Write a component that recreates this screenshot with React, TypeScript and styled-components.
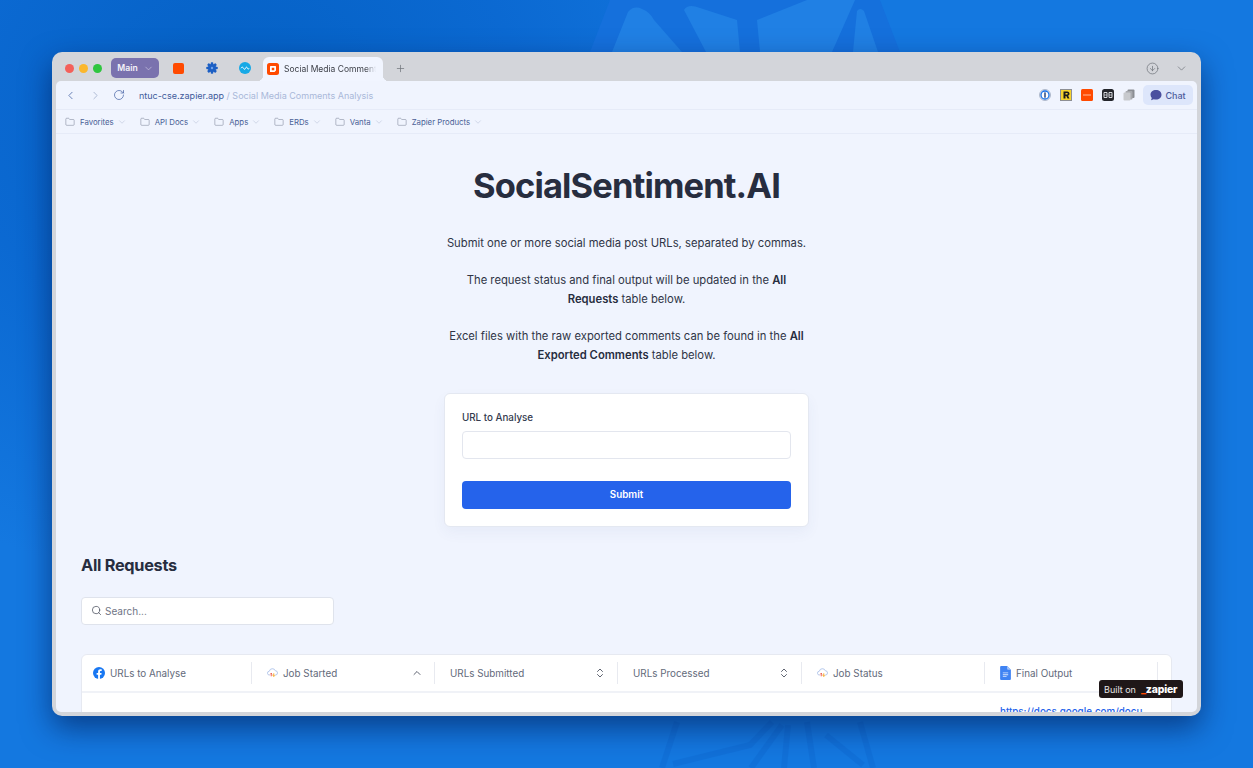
import React from "react";
import styled, { createGlobalStyle } from "styled-components";
import {
  ChevronLeft,
  ChevronRight,
  RotateCw,
  Folder,
  ChevronDown,
  ChevronUp,
  ChevronsUpDown,
  Search,
  Plus,
  CircleArrowDown,
} from "lucide-react";

const Global = createGlobalStyle`
  html, body { margin: 0; padding: 0; height: 768px; overflow: hidden; }
  body { font-family: Inter, "Liberation Sans", sans-serif; }
  * { box-sizing: border-box; }
`;

const Desktop = styled.div`
  position: relative;
  width: 1253px;
  height: 768px;
  padding: 52px 52px;
  overflow: hidden;
  background:
    radial-gradient(ellipse 560px 480px at 240px 110px, #0460c3 0%, rgba(8, 100, 205, 0.75) 50%, rgba(20, 120, 224, 0) 100%),
    #1478e0;
`;

const Wallpaper = styled.svg`
  position: absolute;
  left: 0;
  top: 0;
  width: 1253px;
  height: 768px;
`;

const Win = styled.div`
  position: relative;
  width: 1149px;
  height: 664px;
  display: flex;
  flex-direction: column;
  background: #d3d5da;
  border-radius: 10px;
  box-shadow: 0 12px 30px rgba(0, 25, 80, 0.6);
  padding: 0 4px 4px;
`;

const TabStrip = styled.div`
  height: 29px;
  flex: none;
  display: flex;
  align-items: center;
  padding: 3px 0 0 9px;
`;

const Lights = styled.div`
  display: flex;
  gap: 5px;
  margin-right: 9px;
`;

const Light = styled.span<{ $c: string }>`
  width: 9px;
  height: 9px;
  border-radius: 50%;
  background: ${(p) => p.$c};
`;

const Space = styled.button`
  width: 48px;
  height: 20px;
  border: 0;
  border-radius: 5px;
  background: #7a72ae;
  color: #f4f3fa;
  font: 600 8.6px Inter, sans-serif;
  display: flex;
  align-items: center;
  justify-content: center;
  gap: 5px;
  padding: 0 0 0 1px;
`;

const PinSlot = styled.div`
  width: 33px;
  height: 24px;
  display: flex;
  align-items: center;
  justify-content: center;
`;

const PinRow = styled.div`
  display: flex;
  margin-left: 3px;
  margin-right: 2px;
`;

const ActiveTab = styled.div`
  position: relative;
  align-self: flex-end;
  width: 120px;
  height: 24px;
  background: #f1f5ff;
  border-radius: 6px 6px 0 0;
  display: flex;
  align-items: center;
  gap: 5px;
  padding: 0 0 0 4px;
  &::before, &::after {
    content: "";
    position: absolute;
    bottom: 0;
    width: 6px;
    height: 6px;
  }
  &::before {
    left: -6px;
    background: radial-gradient(circle at 0 0, transparent 6px, #f1f5ff 6.5px);
  }
  &::after {
    right: -6px;
    background: radial-gradient(circle at 100% 0, transparent 6px, #f1f5ff 6.5px);
  }
`;

const TabTitle = styled.span`
  font-size: 8.5px;
  color: #3a3d45;
  white-space: nowrap;
  overflow: hidden;
  width: 92px;
  -webkit-mask-image: linear-gradient(90deg, #000 88%, transparent 100%);
  mask-image: linear-gradient(90deg, #000 88%, transparent 100%);
`;

const NewTab = styled.div`
  margin-left: 12px;
  color: #70747c;
  display: flex;
`;

const StripEnd = styled.div`
  margin-left: auto;
  display: flex;
  align-items: center;
  gap: 16px;
  padding-right: 9px;
  color: #6c7078;
`;

const Panel = styled.div`
  position: relative;
  flex: 1;
  min-height: 0;
  background: #f0f4fe;
  border-radius: 5px;
  overflow: hidden;
  display: flex;
  flex-direction: column;
`;

const AddressBar = styled.div`
  height: 29px;
  flex: none;
  display: flex;
  align-items: center;
  padding: 0 4px 0 8px;
  border-bottom: 1px solid #e6ebf8;
`;

const NavBtn = styled.span<{ $w: number; $c: string }>`
  width: ${(p) => p.$w}px;
  display: flex;
  color: ${(p) => p.$c};
`;

const Url = styled.div`
  margin-left: 6px;
  font-size: 9px;
  color: #3f5b9b;
  white-space: nowrap;
`;

const UrlRest = styled.span`
  color: #a9b8d9;
`;

const ExtRow = styled.div`
  margin-left: auto;
  display: flex;
  align-items: center;
  gap: 9px;
`;

const Chat = styled.div`
  width: 50px;
  height: 20px;
  margin-left: -1px;
  border-radius: 5px;
  background: #dde6fb;
  color: #4d5c9c;
  font-size: 9px;
  font-weight: 500;
  display: flex;
  align-items: center;
  justify-content: center;
  gap: 3px;
`;

const Bookmarks = styled.div`
  height: 24px;
  flex: none;
  display: flex;
  align-items: center;
  padding: 1px 0 0 9px;
  gap: 13px;
  border-bottom: 1px solid #e6ebf8;
`;

const Bookmark = styled.div`
  display: flex;
  align-items: center;
  color: #4a5f96;
  font-size: 7.8px;
  font-weight: 400;
  gap: 5px;
  svg:first-child { color: #7c8598; }
  svg:last-child { color: #b1bbd2; margin-left: -2px; }
`;

const Page = styled.main`
  flex: 1;
  min-height: 0;
  padding: 30px 25px 0;
  overflow: hidden;
`;

const Title = styled.h1`
  margin: 0;
  text-align: center;
  font-size: 34.5px;
  line-height: 44px;
  font-weight: 700;
  letter-spacing: -0.86px;
  color: #272d3f;
`;

const Intro = styled.div`
  width: 364px;
  margin: 26px auto 0;
  text-align: center;
  font-size: 11.25px;
  line-height: 19.5px;
  color: #2f3546;
  p { margin: 0 0 17px; }
  b { font-weight: 600; color: #272d3f; }
`;

const FormCard = styled.form`
  width: 365px;
  height: 134px;
  margin: 27px 0 0 363px;
  padding: 17px 17px 0;
  background: #fff;
  border: 1px solid #e4e8f1;
  border-radius: 6px;
  box-shadow: 0 6px 14px rgba(60, 80, 140, 0.05);
`;

const Label = styled.label`
  display: block;
  font-size: 9.8px;
  line-height: 13px;
  font-weight: 500;
  color: #343a4e;
`;

const TextInput = styled.input`
  display: block;
  width: 329px;
  height: 28px;
  margin-top: 7px;
  border: 1px solid #e3e6ee;
  border-radius: 4px;
  background: #fff;
`;

const Submit = styled.button`
  display: block;
  width: 329px;
  height: 28px;
  margin-top: 22px;
  border: 0;
  border-radius: 4px;
  background: #2563eb;
  color: #fff;
  font: 600 9.8px Inter, sans-serif;
`;

const SectionTitle = styled.h2`
  margin: 27px 0 0;
  font-size: 16.3px;
  line-height: 22px;
  font-weight: 700;
  letter-spacing: -0.28px;
  color: #272d3f;
`;

const SearchBox = styled.div`
  width: 253px;
  height: 28px;
  margin-top: 21px;
  border: 1px solid #dfe3ec;
  border-radius: 4px;
  background: #fff;
  display: flex;
  align-items: center;
  gap: 3px;
  padding-left: 9px;
  color: #6f7585;
  font-size: 10px;
`;

const Table = styled.div`
  width: 1091px;
  height: 120px;
  margin-top: 29px;
  background: #fff;
  border: 1px solid #e6e9f1;
  border-radius: 6px 6px 0 0;
`;

const Row = styled.div<{ $head?: boolean }>`
  display: grid;
  grid-template-columns: 170px 183px 183px 184px 183px 173px 1fr;
  ${(p) => p.$head && "height: 38px; border-bottom: 2px solid #f0f2f7; align-items: center;"}
`;

const HeadCell = styled.div<{ $last?: boolean }>`
  height: 22px;
  display: flex;
  align-items: center;
  gap: 5px;
  padding: 0 11px 0 ${(p) => (p.$last ? "15px" : "11px")};
  border-right: 1px solid #e8eaf0;
  font-size: 9.85px;
  color: #636a7a;
  white-space: nowrap;
`;

const HeadCellPlain = styled(HeadCell)`
  padding-left: 15px;
`;

const Sort = styled.span`
  margin-left: auto;
  display: flex;
  color: #424857;
`;

const Link = styled.a`
  grid-column: 6;
  padding: 12px 0 0 15px;
  font-size: 9.8px;
  font-weight: 500;
  line-height: 14px;
  color: #2563eb;
  text-decoration: underline;
  white-space: nowrap;
`;

const Badge = styled.div`
  position: absolute;
  right: 14px;
  bottom: 14px;
  width: 84px;
  height: 18px;
  border-radius: 3px;
  background: #1f1718;
  color: #e8e6e6;
  font-size: 9px;
  display: flex;
  align-items: center;
  padding-left: 5px;
  gap: 5px;
`;

const BadgeMark = styled.span`
  font-size: 10.5px;
  font-weight: 800;
  color: #fff;
  letter-spacing: -0.2px;
  &::before {
    content: "_";
    color: #ff4a00;
  }
`;

const Fb = () => (
  <svg width="12" height="12" viewBox="0 0 24 24">
    <circle cx="12" cy="12" r="12" fill="#1877f2" />
    <path d="M16.7 15.5l.5-3.5h-3.3V9.8c0-1 .5-1.9 2-1.9h1.5v-3s-1.4-.2-2.7-.2c-2.7 0-4.5 1.700-4.500 4.600V12h-3v3.500h3V24h3.700v-8.500z" fill="#fff" />
  </svg>
);

const Cloud = () => (
  <svg width="11" height="11" viewBox="0 0 26 24" fill="none">
    <path d="M7 18H6a4.500 4.500 0 0 1-.6-9A7.500 7.500 0 0 1 19.800 8 5 5 0 0 1 20 18h-1" stroke="#a9bfe8" strokeWidth="2" />
    <path d="M10 21v-7M7.600 16.200 10 13.800l2.400 2.400" stroke="#ea4335" strokeWidth="2" />
    <path d="M16 14v7M13.600 18.800 16 21.200l2.400-2.400" stroke="#f29900" strokeWidth="2" />
  </svg>
);

const Doc = () => (
  <svg width="11" height="14" viewBox="0 0 20 26">
    <path d="M2 0h11l7 7v17a2 2 0 0 1-2 2H2a2 2 0 0 1-2-2V2a2 2 0 0 1 2-2z" fill="#3f83f3" />
    <path d="M13 0l7 7h-5a2 2 0 0 1-2-2z" fill="#a6c6fa" />
    <path d="M5 12h10v1.600H5zM5 15.500h10v1.600H5zM5 19h7v1.600H5z" fill="#dbe7fd" />
  </svg>
);

const Gear = () => (
  <svg width="12" height="12" viewBox="0 0 24 24">
    <g fill="#1c5fc4">
      {[0, 45, 90, 135].map((a) => (
        <rect key={a} x="9.5" y="0.5" width="5" height="23" rx="1.6" transform={`rotate(${a} 12 12)`} />
      ))}
      <circle cx="12" cy="12" r="8" />
    </g>
    <circle cx="12" cy="12" r="2.4" fill="#6ea2ea" />
  </svg>
);

const Cyan = () => (
  <svg width="12" height="12" viewBox="0 0 24 24" fill="none">
    <circle cx="12" cy="12" r="12" fill="#16a9e6" />
    <path d="M4 12.500c1.500-3 3.500-3 5 0s3 3 4 0 3-3 4 0 2 2.500 3 0" stroke="#fff" strokeWidth="1.8" />
  </svg>
);

const ZapFavicon = () => (
  <svg width="12" height="12" viewBox="0 0 24 24" fill="none">
    <rect width="24" height="24" rx="5" fill="#ff4a00" />
    <path d="M7 6h10a1 1 0 0 1 1 1v8l-3 3H7a1 1 0 0 1-1-1V7a1 1 0 0 1 1-1z" fill="#fff" />
    <rect x="9.5" y="9.5" width="5" height="5" fill="#ff4a00" />
  </svg>
);

const ExtOnePass = () => (
  <svg width="12" height="12" viewBox="0 0 24 24" fill="none">
    <circle cx="12" cy="12" r="11" fill="#dfe7f6" stroke="#9aa5bb" strokeWidth="1.5" />
    <circle cx="12" cy="12" r="8" fill="#fff" stroke="#1a73e8" strokeWidth="2.6" />
    <rect x="10.600" y="6.500" width="2.800" height="11" rx="1.200" fill="#1f3b73" />
  </svg>
);

const ExtR = () => (
  <svg width="12" height="12" viewBox="0 0 24 24">
    <rect width="24" height="24" fill="#8d8f94" />
    <rect x="2" y="2" width="20" height="20" fill="#f6d32d" />
    <path d="M7 5h7.500a4.500 4.500 0 0 1 1.700 8.700L19 19h-4l-2.400-5H11v5H7zM11 8v3h3a1.500 1.500 0 0 0 0-3z" fill="#1b1b1b" />
  </svg>
);

const ExtOrange = () => (
  <svg width="12" height="12" viewBox="0 0 24 24">
    <rect width="24" height="24" rx="3" fill="#ff4a00" />
    <rect x="4" y="11" width="16" height="2" fill="#ffb99a" />
  </svg>
);

const ExtDark = () => (
  <svg width="12" height="12" viewBox="0 0 24 24">
    <rect width="24" height="24" rx="5" fill="#23252b" />
    <path d="M4 7h6v10H4zM14 7h6v10h-6z" fill="none" stroke="#d7d9de" strokeWidth="2" />
    <path d="M4 12h6M14 12h6" stroke="#d7d9de" strokeWidth="1.400" />
  </svg>
);

const ExtCopies = () => (
  <svg width="12" height="12" viewBox="0 0 24 24">
    <rect x="9" y="1" width="14" height="17" rx="2" fill="#8a8d93" />
    <rect x="5" y="4" width="14" height="17" rx="2" fill="#a7a9ae" />
    <rect x="1" y="7" width="14" height="16" rx="2" fill="#c7c9cd" />
  </svg>
);

const ChatBubble = () => (
  <svg width="12" height="12" viewBox="0 0 24 24">
    <path d="M12 2c6.300 0 11 4 11 9.500S18.300 21 12 21c-1.600 0-3.100-.3-4.400-.7L2 22.500l1.600-4.700C2 16 1 13.900 1 11.500 1 6 5.700 2 12 2z" fill="#4a4f9f" />
  </svg>
);

const bookmarks = ["Favorites", "API Docs", "Apps", "ERDs", "Vanta", "Zapier Products"];

export default function App() {
  return (
    <Desktop>
      <Global />
      <Wallpaper viewBox="0 0 1253 768" fill="none">
        <path d="M590 52 610 0H880L900 52z" fill="#1570dc" />
        <path d="M612 52 628 12Q634 5 642 9 650 12 654 20L682 52z" fill="#2080e4" />
        <path d="M684 10Q688 3 700 8L737 20 740 52H706z" fill="#2080e4" />
        <path d="M757 20 807 0H855L832 52H760z" fill="#2080e4" />
        <path d="M853 52 857 11Q860 7 864 11L878 52z" fill="#2080e4" />
        <g stroke="#0e6ad2" strokeWidth="6" opacity="0.45">
          <path d="M662 768 677 722" />
          <path d="M673 764 750 745 772 722" />
          <path d="M751 768 782 725" />
          <path d="M784 768 788 725" />
          <path d="M814 768 807 722" />
          <path d="M826 735 863 765" />
          <path d="M860 722 873 768" />
        </g>
      </Wallpaper>
      <Win>
        <TabStrip>
          <Lights>
            <Light $c="#f4605a" />
            <Light $c="#fbb72c" />
            <Light $c="#2fc63f" />
          </Lights>
          <Space>
            Main <ChevronDown size={11} strokeWidth={1.5} color="#c9c5e0" />
          </Space>
          <PinRow>
            <PinSlot>
              <svg width="11" height="11" viewBox="0 0 11 11">
                <rect width="11" height="11" rx="2" fill="#ff4a00" />
              </svg>
            </PinSlot>
            <PinSlot>
              <Gear />
            </PinSlot>
            <PinSlot>
              <Cyan />
            </PinSlot>
          </PinRow>
          <ActiveTab>
            <ZapFavicon />
            <TabTitle>Social Media Comments Analysis</TabTitle>
          </ActiveTab>
          <NewTab>
            <Plus size={11} strokeWidth={1.6} />
          </NewTab>
          <StripEnd>
            <CircleArrowDown size={13} strokeWidth={1.3} />
            <ChevronDown size={13} strokeWidth={1.3} />
          </StripEnd>
        </TabStrip>
        <Panel>
          <AddressBar>
            <NavBtn $w={25} $c="#4d6aa8">
              <ChevronLeft size={13} strokeWidth={1.5} />
            </NavBtn>
            <NavBtn $w={24} $c="#a0aecb">
              <ChevronRight size={13} strokeWidth={1.5} />
            </NavBtn>
            <NavBtn $w={20} $c="#4d6aa8">
              <RotateCw size={12} strokeWidth={1.5} />
            </NavBtn>
            <Url>
              ntuc-cse.zapier.app <UrlRest>/ Social Media Comments Analysis</UrlRest>
            </Url>
            <ExtRow>
              <ExtOnePass />
              <ExtR />
              <ExtOrange />
              <ExtDark />
              <ExtCopies />
              <Chat>
                <ChatBubble />
                Chat
              </Chat>
            </ExtRow>
          </AddressBar>
          <Bookmarks>
            {bookmarks.map((b) => (
              <Bookmark key={b}>
                <Folder size={10} strokeWidth={1.3} />
                {b}
                <ChevronDown size={10} strokeWidth={1.2} />
              </Bookmark>
            ))}
          </Bookmarks>
          <Page>
            <Title>SocialSentiment.AI</Title>
            <Intro>
              <p>Submit one or more social media post URLs, separated by commas.</p>
              <p>
                The request status and final output will be updated in the <b>All Requests</b> table below.
              </p>
              <p>
                Excel files with the raw exported comments can be found in the <b>All Exported Comments</b> table below.
              </p>
            </Intro>
            <FormCard>
              <Label>URL to Analyse</Label>
              <TextInput />
              <Submit type="button">Submit</Submit>
            </FormCard>
            <SectionTitle>All Requests</SectionTitle>
            <SearchBox>
              <Search size={11} strokeWidth={1.5} color="#3c4250" />
              Search...
            </SearchBox>
            <Table>
              <Row $head>
                <HeadCell>
                  <Fb />
                  URLs to Analyse
                </HeadCell>
                <HeadCellPlain>
                  <Cloud />
                  Job Started
                  <Sort>
                    <ChevronUp size={12} strokeWidth={1.7} />
                  </Sort>
                </HeadCellPlain>
                <HeadCellPlain>
                  URLs Submitted
                  <Sort>
                    <ChevronsUpDown size={12} strokeWidth={1.7} />
                  </Sort>
                </HeadCellPlain>
                <HeadCellPlain>
                  URLs Processed
                  <Sort>
                    <ChevronsUpDown size={12} strokeWidth={1.7} />
                  </Sort>
                </HeadCellPlain>
                <HeadCellPlain>
                  <Cloud />
                  Job Status
                </HeadCellPlain>
                <HeadCell $last>
                  <Doc />
                  Final Output
                </HeadCell>
              </Row>
              <Row>
                <Link>https://docs.google.com/docu</Link>
              </Row>
            </Table>
          </Page>
          <Badge>
            Built on <BadgeMark>zapier</BadgeMark>
          </Badge>
        </Panel>
      </Win>
    </Desktop>
  );
}
